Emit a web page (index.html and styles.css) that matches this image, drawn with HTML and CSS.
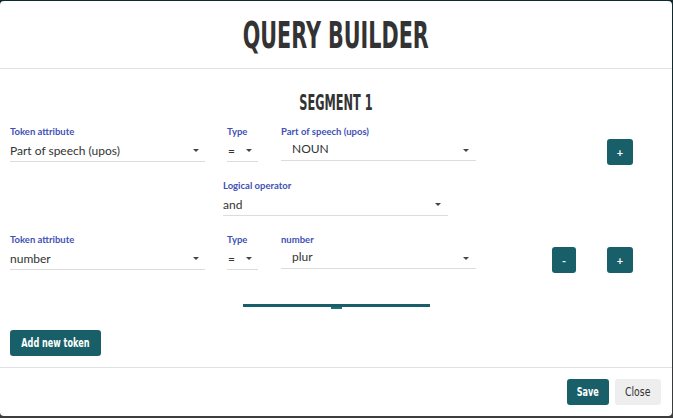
FILE: index.html
```html
<!DOCTYPE html>
<html lang="en">
<head>
<meta charset="utf-8">
<title>Query Builder</title>
<link rel="stylesheet" href="styles.css">
</head>
<body>
<div class="modal">
  <header class="modal-header">
    <h1 class="title">QUERY BUILDER</h1>
  </header>
  <main class="modal-body">
    <h2 class="segment-title">SEGMENT 1</h2>

    <div class="token-row">
      <div class="field field-attr">
        <label class="field-label">Token attribute</label>
        <div class="select"><span>Part of speech (upos)</span><span class="caret"></span></div>
      </div>
      <div class="field field-type">
        <label class="field-label">Type</label>
        <div class="select"><span>=</span><span class="caret"></span></div>
      </div>
      <div class="field field-value">
        <label class="field-label">Part of speech (upos)</label>
        <div class="select select-value"><span>NOUN</span><span class="caret"></span></div>
      </div>
      <div class="actions">
        <button class="btn btn-icon">+</button>
      </div>
    </div>

    <div class="logic-row">
      <div class="field field-logic">
        <label class="field-label">Logical operator</label>
        <div class="select"><span>and</span><span class="caret"></span></div>
      </div>
    </div>

    <div class="token-row">
      <div class="field field-attr">
        <label class="field-label">Token attribute</label>
        <div class="select"><span>number</span><span class="caret"></span></div>
      </div>
      <div class="field field-type">
        <label class="field-label">Type</label>
        <div class="select"><span>=</span><span class="caret"></span></div>
      </div>
      <div class="field field-value">
        <label class="field-label">number</label>
        <div class="select select-value"><span>plur</span><span class="caret"></span></div>
      </div>
      <div class="actions">
        <button class="btn btn-icon btn-minus">-</button>
        <button class="btn btn-icon">+</button>
      </div>
    </div>

    <div class="segment-indicator">
      <div class="indicator-bar"></div>
      <div class="indicator-tab"></div>
    </div>

    <button class="btn btn-primary btn-add"><span class="btn-text">Add new token</span></button>
  </main>
  <footer class="modal-footer">
    <button class="btn btn-primary btn-save"><span class="btn-text">Save</span></button>
    <button class="btn btn-light"><span class="btn-text btn-text-light">Close</span></button>
  </footer>
</div>
</body>
</html>
```

FILE: styles.css
```css
* { box-sizing: border-box; }

html, body {
  margin: 0;
  padding: 0;
}

body {
  width: 673px;
  height: 418px;
  overflow: hidden;
  background: linear-gradient(180deg, #10292c 0%, #1f3133 60%, #3d3d3d 100%);
  font-family: Lato, "Open Sans", sans-serif;
}

.modal {
  width: 672px;
  height: 415px;
  margin-top: 1px;
  background: #fff;
  border-radius: 4px;
  display: flex;
  flex-direction: column;
}

.modal-header {
  height: 68px;
  border-bottom: 1px solid #dee2e6;
  display: flex;
  align-items: center;
  justify-content: center;
}

.title {
  margin: 0;
  font-family: "DejaVu Sans Condensed", "Liberation Sans", sans-serif;
  font-weight: 700;
  font-size: 38px;
  line-height: 40px;
  color: #333;
  transform: scaleX(0.605);
}

.modal-body {
  flex: 1;
  padding: 22px 10px 11px 10px;
  display: flex;
  flex-direction: column;
  align-items: flex-start;
}

.segment-title {
  align-self: stretch;
  text-align: center;
  margin: 0 0 11px 0;
  font-family: "DejaVu Sans Condensed", "Liberation Sans", sans-serif;
  font-weight: 700;
  font-size: 21px;
  line-height: 24px;
  color: #333;
  transform: scaleX(0.6);
}

.token-row {
  display: flex;
  align-items: flex-end;
}

.field {
  display: flex;
  flex-direction: column;
}

.field-label {
  font-size: 9.5px;
  font-weight: 700;
  line-height: 12px;
  height: 12px;
  margin-bottom: 1px;
  color: #3f51b5;
  white-space: nowrap;
}

.select {
  height: 23px;
  border-bottom: 1px solid #dcdcdc;
  display: flex;
  align-items: center;
  justify-content: space-between;
  font-size: 12px;
  color: #333;
  padding-right: 6px;
  white-space: nowrap;
}

.caret {
  width: 0;
  height: 0;
  border-left: 3px solid transparent;
  border-right: 3px solid transparent;
  border-top: 3px solid #444;
}

.field-attr { width: 195px; margin-right: 22px; }
.field-type { width: 31px; margin-right: 23px; }
.field-value { width: 195px; }
.field-type .select { padding-left: 1px; }

.select-value {
  height: 22px;
  padding-left: 11px;
  padding-right: 7px;
  padding-bottom: 3px;
  margin-bottom: 1px;
}
.select-value .caret { margin-top: 4px; }

.actions {
  width: 81px;
  margin-left: 76px;
  margin-bottom: -3px;
  display: flex;
  justify-content: flex-end;
  gap: 31px;
}

.logic-row {
  margin-top: 18px;
  margin-bottom: 18px;
  margin-left: 213px;
}

.field-logic { width: 225px; }
.field-logic .select { padding-right: 7px; }

.btn {
  border: none;
  border-radius: 3px;
  font-family: "DejaVu Sans Condensed", "Liberation Sans", sans-serif;
  font-size: 12px;
  cursor: pointer;
  padding: 0;
  display: flex;
  align-items: center;
  justify-content: center;
  white-space: nowrap;
}

.btn-text {
  display: inline-block;
  transform: scaleX(0.75);
}

.btn-text-light {
  transform: scaleX(0.86);
}

.btn-icon {
  width: 26px;
  height: 26px;
  background: #185f69;
  color: #fff;
  font-family: Lato, sans-serif;
  font-weight: 700;
  font-size: 11px;
}

.btn-minus { width: 24px; }

.segment-indicator {
  align-self: stretch;
  margin-top: 34px;
  display: flex;
  flex-direction: column;
  align-items: center;
}

.indicator-bar {
  width: 187px;
  height: 3px;
  background: #185f69;
}

.indicator-tab {
  width: 11px;
  height: 2px;
  background: #1f6f7b;
}

.btn-primary {
  background: #185f69;
  color: #fff;
  font-weight: 700;
  height: 26px;
}

.btn-add {
  margin-top: 21px;
  width: 91px;
}

.modal-footer {
  height: 49px;
  border-top: 1px solid #dee2e6;
  display: flex;
  align-items: center;
  justify-content: flex-end;
  gap: 6px;
  padding-right: 11px;
}

.btn-save { width: 42px; }

.btn-light {
  background: #eeeeee;
  color: #333;
  height: 26px;
  width: 46px;
}
```
